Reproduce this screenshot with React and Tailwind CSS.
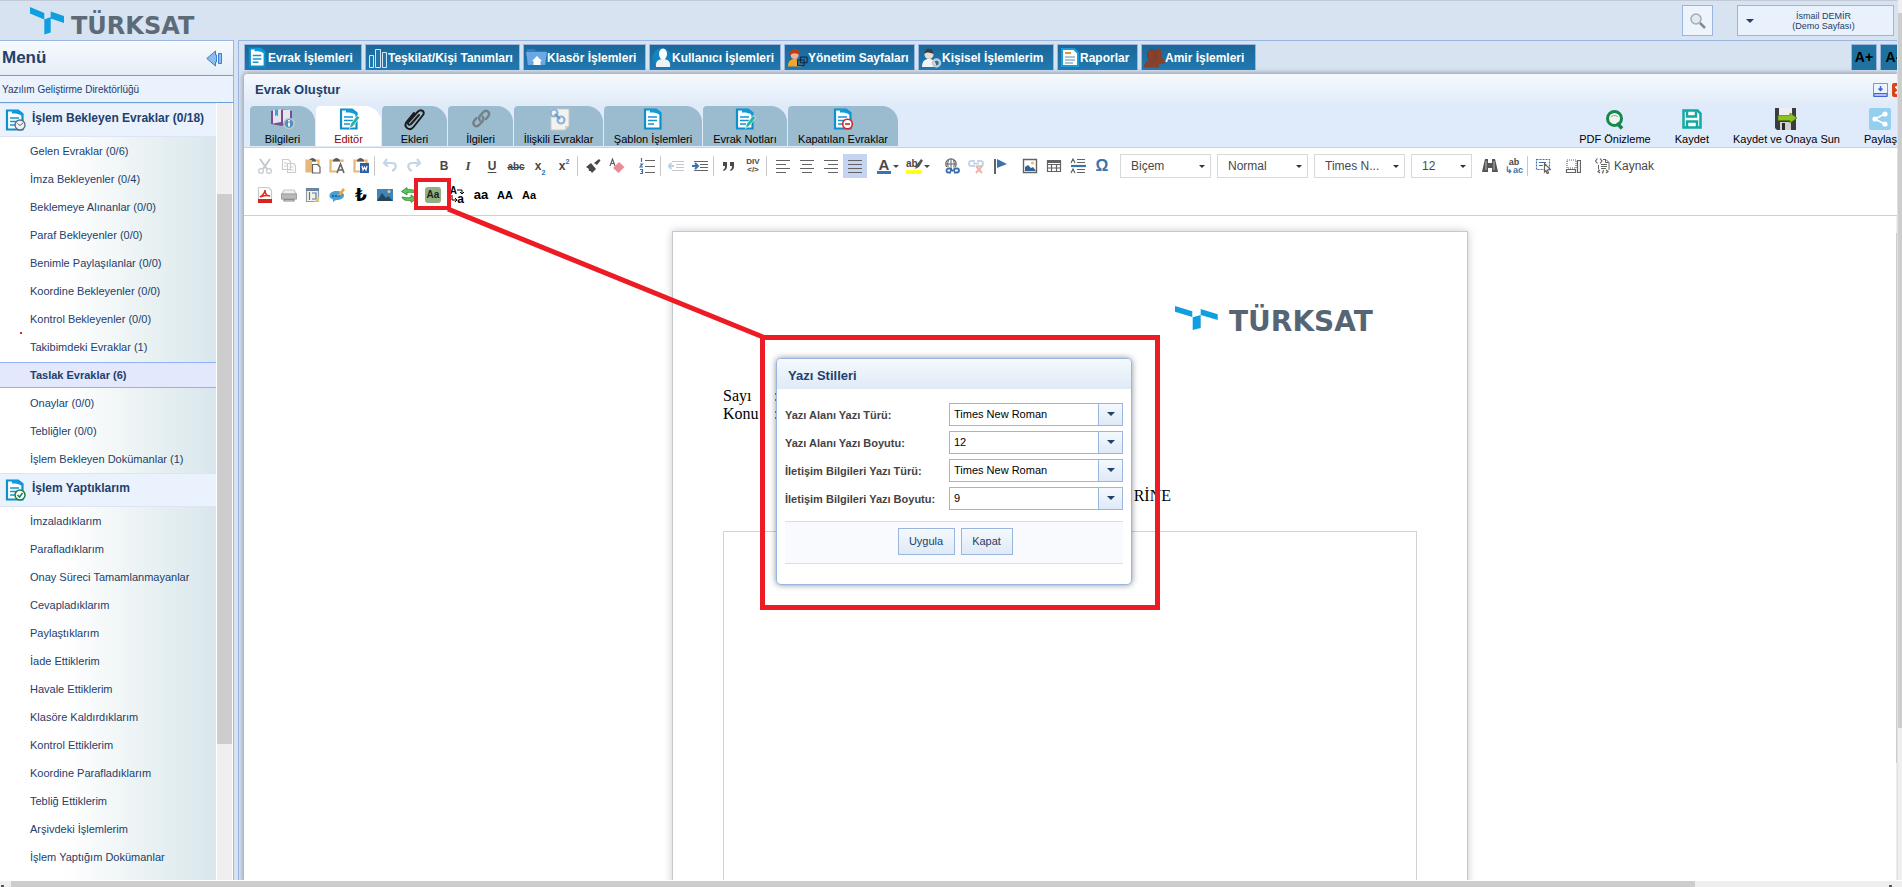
import { useState } from "react";
import clsx from "clsx";

const pending = [
    "Gelen Evraklar (0/6)",
    "İmza Bekleyenler (0/4)",
    "Beklemeye Alınanlar (0/0)",
    "Paraf Bekleyenler (0/0)",
    "Benimle Paylaşılanlar (0/0)",
    "Koordine Bekleyenler (0/0)",
    "Kontrol Bekleyenler (0/0)",
    "Takibimdeki Evraklar (1)",
    "Taslak Evraklar (6)",
    "Onaylar (0/0)",
    "Tebliğler (0/0)",
    "İşlem Bekleyen Dokümanlar (1)",
];

const done = [
    "İmzaladıklarım",
    "Parafladıklarım",
    "Onay Süreci Tamamlanmayanlar",
    "Cevapladıklarım",
    "Paylaştıklarım",
    "İade Ettiklerim",
    "Havale Ettiklerim",
    "Klasöre Kaldırdıklarım",
    "Kontrol Ettiklerim",
    "Koordine Parafladıklarım",
    "Tebliğ Ettiklerim",
    "Arşivdeki İşlemlerim",
    "İşlem Yaptığım Dokümanlar",
];

// Blue sheet used all over the app, with an optional badge in the corner
function DocIcon({ badge, size = 22 }) {
    return (
        <svg width={size} height={size} viewBox="0 0 22 22" fill="none" className="shrink-0">
            <path d="M3 1.500h11l4.500 3.500v15.500H3z" fill="#fff" stroke="#0f8fcb" strokeWidth="2.200" />
            <path d="M8 1h6l5 4v3c-3-3-6-3.500-11-3.500z" fill="#0d9ade" />
            <path d="M6 9h9M6 12.500h9M6 16h6" stroke="#1494d2" strokeWidth="1.600" />
            {badge === "pencil" && (
                <path d="M11.500 20.500l1-4.500 6.500-8.500 2.800 2-6.500 8.500z" fill="#27b5a3" stroke="#fff" strokeWidth=".6" />
            )}
            {badge === "clock" && (
                <g stroke="#5d6a73">
                    <circle cx="16" cy="16" r="5" fill="#eef1f3" strokeWidth="1.300" />
                    <path d="M13.500 14.500l2.500 2 3-2.500" />
                </g>
            )}
            {badge === "check" && (
                <g>
                    <circle cx="16" cy="16" r="5" fill="#fff" stroke="#15803f" strokeWidth="1.500" />
                    <path d="M13.500 16l2 2 3-4" stroke="#15803f" strokeWidth="1.500" />
                </g>
            )}
            {badge === "minus" && (
                <g>
                    <circle cx="15.500" cy="16" r="4.800" fill="#fff" stroke="#d2232a" strokeWidth="1.600" />
                    <path d="M13 16h5" stroke="#d2232a" strokeWidth="1.600" />
                </g>
            )}
        </svg>
    );
}

function BookIcon() {
    return (
        <svg width="24" height="22" viewBox="0 0 24 22">
            <path d="M0 3l9-2 2 1 2-1 8 2v13l-8 .500-2 1.500-11-2z" fill="#7a4d90" />
            <path d="M2 2l8-1v13l-8 1.500zM12 1.500l7 .5v12l-7 1z" fill="#e4e6ec" />
            <path d="M4 1.500h3v7L5.500 7 4 8.500z" fill="#3aa3dc" />
            <circle cx="18" cy="15.500" r="5" fill="#4b91c1" stroke="#c3c8cc" strokeWidth="1.500" />
            <path d="M18 12v1.500M18 14.500v4" stroke="#fff" strokeWidth="1.800" />
        </svg>
    );
}

function ClipIcon() {
    return (
        <svg width="24" height="24" viewBox="0 0 24 24" fill="none" stroke="#1c1c1c" strokeWidth="2" strokeLinecap="round">
            <path d="M16 7l-8 9c-1.500 2-4 0-2.500-2L15 3.500c3-3 7.500 0 5 3.500L10.500 19c-3.500 4.500-10.500.5-7-5L11 5" />
        </svg>
    );
}

function ChainIcon() {
    return (
        <svg width="22" height="22" viewBox="0 0 22 22" fill="none" stroke="#73818a" strokeWidth="2.400" strokeLinecap="round">
            <path d="M10 12.500c-2-2.500-1-4 1-6l3-3c3-2 6.500 1 4.500 4.500L16 11" />
            <path d="M12.500 8.500c2 2.500 1 4-1 6l-3 3c-3 2-6.500-1-4.500-4.500L6.500 10" />
        </svg>
    );
}

function RelatedIcon() {
    return (
        <svg width="22" height="23" viewBox="0 0 22 23" fill="none">
            <path d="M3 1h18v17l-4 4H3z" fill="#f2f2f0" stroke="#c9c9c5" />
            <path d="M17 22v-4h4z" fill="#d3d2ca" />
            <circle cx="6" cy="5" r="3.500" stroke="#8db4d6" strokeWidth="2.200" />
            <circle cx="13" cy="12" r="3.500" stroke="#8db4d6" strokeWidth="2.200" />
            <path d="M7 6l5 5" stroke="#6f9cc6" strokeWidth="2.400" />
        </svg>
    );
}

const navItems = [
    { label: "Evrak İşlemleri", width: "w-[118px]", icon: <DocIcon size={21} /> },
    {
        label: "Teşkilat/Kişi Tanımları",
        width: "w-[155px]",
        icon: (
            <svg width="20" height="20" viewBox="0 0 20 20" fill="#2276ad" stroke="#d4e6f3">
                <path d="M1.500 7.500h4v12h-4zM7.500 1.500h5v18h-5zM14.500 4.500h4v15h-4z" />
            </svg>
        ),
    },
    {
        label: "Klasör İşlemleri",
        width: "w-[123px]",
        icon: (
            <svg width="21" height="19" viewBox="0 0 21 19">
                <path d="M1 1h7l2 2h10v14H1z" fill="#2f7fc4" />
                <path d="M0 4h21l-2 13H2z" fill="#6aa9e4" />
                <path d="M11 8l5 5h-1.500v4h-7v-4H6z" fill="#fff" />
            </svg>
        ),
    },
    {
        label: "Kullanıcı İşlemleri",
        width: "w-[132px]",
        icon: (
            <svg width="20" height="20" viewBox="0 0 20 20">
                <circle cx="10" cy="9.500" r="9.500" fill="#1583c2" />
                <ellipse cx="11" cy="6" rx="4" ry="5.500" fill="#fff" />
                <path d="M4 19c-1-6 3-8 7-8s8 2 7 8z" fill="#eef2f5" />
            </svg>
        ),
    },
    {
        label: "Yönetim Sayfaları",
        width: "w-[131px]",
        icon: (
            <svg width="21" height="20" viewBox="0 0 22 20">
                <path d="M1 19c0-6 3-8 7-8s7 2 7 8z" fill="#f2a629" />
                <circle cx="8" cy="7" r="4" fill="#f5b08a" />
                <path d="M3 7c-1-8 11-9 10-1-3 0-5-3-10 1z" fill="#c33a17" />
                <path d="M14 9h7v6h-7zM11 12h7v6h-7z" fill="#2a70a8" stroke="#0b2238" />
            </svg>
        ),
    },
    {
        label: "Kişisel İşlemlerim",
        width: "w-[136px]",
        icon: (
            <svg width="21" height="20" viewBox="0 0 21 20">
                <path d="M1 19c0-6 3-8 7-8s7 2 7 8z" fill="#f1f5f8" />
                <circle cx="8" cy="6.500" r="4.500" fill="#e8ded6" />
                <path d="M3.500 6c0-7 9-7 9 0-3-1-6-3-9 0z" fill="#3c3c3c" />
                <circle cx="15.500" cy="15" r="3.500" fill="none" stroke="#c3cbd1" strokeWidth="2.500" />
            </svg>
        ),
    },
    {
        label: "Raporlar",
        width: "w-[81px]",
        icon: (
            <svg width="20" height="19" viewBox="0 0 20 19" fill="none">
                <path d="M2 1h12l4 4v13H2z" fill="#fff" stroke="#1e9ad6" strokeWidth="2" />
                <path d="M5 5h6" stroke="#ef9231" strokeWidth="2" />
                <path d="M5 9h10M5 12h10M5 15h8" stroke="#8fb4cc" strokeWidth="1.500" />
            </svg>
        ),
    },
    {
        label: "Amir İşlemleri",
        width: "w-[115px]",
        icon: (
            <svg width="21" height="20" viewBox="0 0 22 20" fill="#8a412c">
                <ellipse cx="15" cy="5" rx="4" ry="5" />
                <path d="M11 9h7c3 2 4 4 4 7H11z" />
                <ellipse cx="8" cy="7" rx="4.500" ry="6" stroke="#6f3121" strokeWidth=".6" />
                <path d="M0 20c0-5 3-8 8-8s8 3 8 8z" />
            </svg>
        ),
    },
];

const tabs = [
    { label: "Bilgileri", width: "w-[65px]", icon: <BookIcon /> },
    { label: "Editör", width: "w-[65px]", icon: <DocIcon badge="pencil" /> },
    { label: "Ekleri", width: "w-[65px]", icon: <ClipIcon /> },
    { label: "İlgileri", width: "w-[65px]", icon: <ChainIcon /> },
    { label: "İlişkili Evraklar", width: "w-[89px]", icon: <RelatedIcon /> },
    { label: "Şablon İşlemleri", width: "w-[98px]", icon: <DocIcon /> },
    { label: "Evrak Notları", width: "w-[84px]", icon: <DocIcon badge="pencil" /> },
    { label: "Kapatılan Evraklar", width: "w-[110px]", icon: <DocIcon badge="minus" /> },
];

const actions = [
    {
        label: "PDF Önizleme",
        icon: (
            <svg width="20" height="22" viewBox="0 0 20 22" fill="none">
                <circle cx="9.500" cy="10.500" r="7" fill="#eef6f2" stroke="#16884b" strokeWidth="3" />
                <path d="M12 15l5 5.500" stroke="#16884b" strokeWidth="3.500" />
                <path d="M6 9c2-2 5-2 7 0" stroke="#5bb385" />
            </svg>
        ),
    },
    {
        label: "Kaydet",
        icon: (
            <svg width="20" height="22" viewBox="0 0 20 22" fill="none" stroke="#10a9a4" strokeWidth="2.500">
                <path d="M1.500 2.500h14l3 3v14h-17z" fill="#fff" />
                <path d="M5 2.500v6h9v-6M5 19.500v-6h10v6" />
            </svg>
        ),
    },
    {
        label: "Kaydet ve Onaya Sun",
        icon: (
            <svg width="24" height="22" viewBox="0 0 24 22">
                <path d="M1 0h21v22H3l-2-2z" fill="#3b3b40" />
                <path d="M5 0h13v9H5z" fill="#eeeef0" />
                <path d="M6 14h11v8H6z" fill="#cfcfd2" />
                <path d="M8 15h3v7H8z" fill="#2a2a2d" />
                <path d="M4 7.500h12V5l7 5-7 5v-2.500H4z" fill="#8cc21f" stroke="#4f7d10" strokeWidth=".7" />
            </svg>
        ),
    },
    {
        label: "Paylaş",
        icon: (
            <svg width="22" height="22" viewBox="0 0 22 22">
                <rect width="22" height="22" rx="2" fill="#95cfee" />
                <path d="M15.500 6L6 11l9.500 5" stroke="#fff" strokeWidth="1.500" fill="none" />
                <circle cx="16" cy="6" r="2.600" fill="#fff" />
                <circle cx="6" cy="11" r="2.600" fill="#fff" />
                <circle cx="16" cy="16" r="2.600" fill="#fff" />
            </svg>
        ),
    },
];

function Svg({ children, size = 16 }) {
    return (
        <svg width={size} height={size} viewBox="0 0 16 16" fill="none" stroke="#636363" strokeWidth="1.200">
            {children}
        </svg>
    );
}

function Clipboard({ children }) {
    return (
        <Svg>
            <path d="M1.500 2.500h12v11h-12z" fill="#fff" stroke="#e3b878" strokeWidth="2.200" />
            <path d="M4 2.500c0-1 2-2.500 3.500-2.500S11 1.500 11 2.500v1H4z" fill="#5b5b5b" stroke="none" />
            {children}
        </Svg>
    );
}

function Tool({ title, active, wide, children }) {
    return (
        <button
            type="button"
            title={title}
            className={clsx(
                "flex h-[24px] shrink-0 items-center justify-center text-[#484848]",
                wide ? "w-[30px]" : "w-[24px]",
                active && "bg-[#c4d4f1]"
            )}
        >
            {children}
        </button>
    );
}

const Sep = () => <span className="-mr-px ml-px h-[20px] w-[5px] shrink-0 border-l border-[#c8c8c8]" />;

const Caret = () => <span className="border-x-[3px] border-t-[3px] border-x-transparent border-t-[#484848]" />;

function Combo({ label, value, width }) {
    return (
        <span className={clsx("relative mr-[6px] flex shrink-0 items-center", width)}>
            <select aria-label={label} className="h-[24px] w-full appearance-none border border-[#d9d9d9] bg-white pl-[10px] text-[12px] leading-[16px] text-[#484848]">
                <option>{value}</option>
            </select>
            <span className="pointer-events-none absolute right-[6px] border-x-[3px] border-t-[3px] border-x-transparent border-t-[#333]" />
        </span>
    );
}

const lines = (d) => (
    <Svg>
        <path d={d} />
    </Svg>
);

function EditorToolbar() {
    return (
        <div className="border-y border-[#d1d1d1] bg-white pt-[6px] pb-[8px] pl-[9px]" role="toolbar">
            <div className="flex items-center">
                <Tool title="Kes">
                    <Svg>
                        <g stroke="#c5c9ce">
                            <path d="M3 1l7 10M13 1L6 11" strokeWidth="2" />
                            <circle cx="4" cy="13" r="2.400" />
                            <circle cx="12" cy="13" r="2.400" />
                        </g>
                    </Svg>
                </Tool>
                <Tool title="Kopyala">
                    <Svg>
                        <g stroke="#c9cdd2">
                            <path d="M1.500 1.500h6l2 2v8h-8zM6.500 5.500h6l2 2v7h-8z" fill="#fff" />
                            <path d="M3 5h3M3 8h3M8.500 9h4M8.500 12h4" />
                        </g>
                    </Svg>
                </Tool>
                <Tool title="Yapıştır">
                    <Clipboard>
                        <path d="M1 2h6v12H1z" fill="#e3b878" stroke="none" />
                        <path d="M7.500 6.500h5l2.500 2.500v6H7.500z" fill="#fff" />
                    </Clipboard>
                </Tool>
                <Tool title="Düz metin olarak yapıştır">
                    <Clipboard>
                        <path d="M8 4h8v12H8z" fill="#fff" stroke="none" />
                        <path d="M8 15l3.500-9L15 15M9 12h5" strokeWidth="1.600" />
                    </Clipboard>
                </Tool>
                <Tool title="Word'den yapıştır">
                    <Clipboard>
                        <path d="M7 5h9v10H7z" fill="#2c5fa8" stroke="none" />
                        <path d="M9 8l1 4 1.500-3 1.500 3 1-4" stroke="#fff" />
                    </Clipboard>
                </Tool>
                <Sep />
                <Tool title="Geri al">
                    <Svg>
                        <path d="M5 1L2 5l4 3.500M2.500 5H10c5 0 5 6 0 8" stroke="#c3d6e8" strokeWidth="2.200" />
                    </Svg>
                </Tool>
                <Tool title="Tekrar yap">
                    <Svg>
                        <path d="M11 1l3 4-4 3.500M13.500 5H6c-5 0-5 6 0 8" stroke="#c3d6e8" strokeWidth="2.200" />
                    </Svg>
                </Tool>
                <div className="ml-[6px] flex">
                    <Tool title="Kalın">
                        <b className="text-[12px]">B</b>
                    </Tool>
                    <Tool title="İtalik">
                        <b className="font-['Liberation_Serif',serif] text-[13px] italic">I</b>
                    </Tool>
                    <Tool title="Altı çizgili">
                        <b className="text-[12px] underline underline-offset-2">U</b>
                    </Tool>
                    <Tool title="Üstü çizgili">
                        <span className="text-[10px] font-bold line-through">abc</span>
                    </Tool>
                    <Tool title="Alt simge">
                        <b className="text-[12px]">x</b>
                        <b className="self-end text-[7px] text-[#2f6fb0]">2</b>
                    </Tool>
                    <Tool title="Üst simge">
                        <b className="text-[12px]">x</b>
                        <b className="self-start pt-[3px] text-[7px] text-[#2f6fb0]">2</b>
                    </Tool>
                </div>
                <Sep />
                <Tool title="Biçimi kopyala">
                    <Svg>
                        <path d="M9 5l5-4 1.500 1.500L12 7zM1 9l5-4 5 6-4 4-1.500-2L4 13l-.5-2.500z" fill="#484848" stroke="none" />
                    </Svg>
                </Tool>
                <Tool title="Biçimi kaldır">
                    <Svg>
                        <path d="M1 8l2.500-7L6 8M2 5.500h3" />
                        <path d="M4 10l6-6 5.500 5-6 6z" fill="#ea8c96" stroke="none" />
                    </Svg>
                </Tool>
                <div className="ml-[6px] flex">
                    <Tool title="Numaralı liste">
                        <Svg>
                            <path d="M6 2.500h10M6 8.500h10M6 14.500h10" />
                            <path d="M2.500 0v4M1 6h2.500L1 9h3M1 11.500h2.500v4H1M2 13.500h1.500" stroke="#3a73b0" />
                        </Svg>
                    </Tool>
                </div>
                <Sep />
                <Tool title="Girintiyi azalt">
                    <Svg>
                        <path d="M4 3.500h12M8 6.500h8M8 9.500h8M4 12.500h12" stroke="#c3c7cc" />
                        <path d="M6 8H1M3.500 5L.5 8l3 3" stroke="#bcd2e8" strokeWidth="2" />
                    </Svg>
                </Tool>
                <Tool title="Girintiyi artır">
                    <Svg>
                        <path d="M2 3.500h14M8 6.500h8M8 9.500h8M2 12.500h14" />
                        <path d="M0 8h5M3 5l3 3-3 3" stroke="#3a73b0" strokeWidth="2" />
                    </Svg>
                </Tool>
                <Sep />
                <Tool title="Alıntı">
                    <Svg>
                        <path d="M2 4h4v4c0 3-1 4-3.500 5l-.5-1c1.500-1 2-2 2-4H2zM9 4h4v4c0 3-1 4-3.500 5l-.5-1c1.500-1 2-2 2-4H9z" fill="#484848" stroke="none" />
                    </Svg>
                </Tool>
                <Tool title="Div ekle">
                    <span className="flex flex-col text-[8px] leading-[8px] font-bold">
                        <span>DIV</span>
                        <span>&lt;/&gt;</span>
                    </span>
                </Tool>
                <Sep />
                <div className="ml-px flex">
                    <Tool title="Sola hizala">{lines("M1 2.500h14M1 6.500h10M1 10.500h14M1 14.500h10")}</Tool>
                    <Tool title="Ortala">{lines("M1 2.500h14M3 6.500h10M1 10.500h14M3 14.500h10")}</Tool>
                    <Tool title="Sağa hizala">{lines("M1 2.500h14M5 6.500h10M1 10.500h14M5 14.500h10")}</Tool>
                    <Tool title="İki yana yasla" active>
                        {lines("M1 2.500h14M1 6.500h14M1 10.500h14M1 14.500h14")}
                    </Tool>
                </div>
                <div className="ml-[6px] flex">
                    <Tool title="Yazı rengi" wide>
                        <span className="mr-[2px] border-b-[3px] border-[#3a73b0] px-[2px] text-[15px] leading-[13px] font-bold">A</span>
                        <Caret />
                    </Tool>
                    <Tool title="Arka plan rengi" wide>
                        <span className="mr-[2px] flex w-[16px] border-b-4 border-[#ffff20] text-[10px] leading-[12px] font-bold">
                            ab
                            <svg className="-ml-[3px] shrink-0" width="8" height="12" viewBox="0 0 8 12">
                                <path d="M0 11l1.500-4L6 1l2 1.500L4 9z" fill="#555" />
                            </svg>
                        </span>
                        <Caret />
                    </Tool>
                </div>
                <div className="ml-[7px] flex">
                    <Tool title="Bağlantı">
                        <Svg>
                            <circle cx="7" cy="6" r="5.200" />
                            <path d="M2 6h10M7 1v10M4.500 2c-1 3-1 5 0 8M9.500 2c1 3 1 5 0 8" strokeWidth="1" />
                            <path d="M1 9h15v6H1z" fill="#fff" stroke="none" />
                            <path d="M8 10.500H4.500a2 2 0 000 4H7M9.500 10.500H13a2 2 0 010 4h-3M6 12.500h5" stroke="#3a6ea8" strokeWidth="1.800" />
                        </Svg>
                    </Tool>
                    <Tool title="Bağlantıyı kaldır">
                        <Svg>
                            <path d="M7 3H3.500a2 2 0 000 5H7M9 3h3.500a2 2 0 010 5H9M5 5.500h6" stroke="#c3d5e6" strokeWidth="2" />
                            <path d="M8 8l6 7M14 8l-6 7" stroke="#efb3a5" strokeWidth="2" />
                        </Svg>
                    </Tool>
                    <Tool title="Çapa">
                        <Svg>
                            <path d="M3 1v15" strokeWidth="2" />
                            <path d="M5 1l10 5-10 4z" fill="#3a73b0" stroke="none" />
                        </Svg>
                    </Tool>
                </div>
                <div className="ml-[6px] flex">
                    <Tool title="Resim">
                        <Svg>
                            <path d="M1.500 1.500h13v13h-13z" strokeWidth="1.400" />
                            <path d="M3 13V9l3-2 3 3 2-1 3 4z" fill="#2f6396" stroke="none" />
                            <circle cx="10.500" cy="5" r="1.600" fill="#eac06f" stroke="none" />
                        </Svg>
                    </Tool>
                    <Tool title="Tablo">
                        <Svg>
                            <path d="M1.500 2.500h13v11h-13zM1 6.500h14M1 10h14M5.500 6v8M10.500 6v8" />
                            <path d="M1 2h14v3H1z" fill="#636363" stroke="none" />
                        </Svg>
                    </Tool>
                    <Tool title="Yatay çizgi">
                        <Svg>
                            <path d="M1 5l2-4 2 4M1 15l2-4 2 4M7 1.500h8M7 4.500h8M7 11.500h8M7 14.500h8" />
                            <path d="M1 8h15" stroke="#3a73b0" strokeWidth="2.200" />
                        </Svg>
                    </Tool>
                    <Tool title="Özel karakter">
                        <b className="text-[16px] text-[#3a73b0]">Ω</b>
                    </Tool>
                </div>
                <div className="ml-[6px] flex">
                    <Combo label="Biçem" value="Biçem" width="w-[91px]" />
                    <Combo label="Paragraf" value="Normal" width="w-[91px]" />
                    <Combo label="Yazı türü" value="Times N..." width="w-[91px]" />
                    <Combo label="Boyut" value="12" width="w-[61px]" />
                </div>
                <Tool title="Bul">
                    <Svg>
                        <path d="M2 5l1-4h3v4h4V1h3l1 4 2 9h-6v-4H6v4H0z" fill="#555" stroke="none" />
                        <path d="M4 3v9M12 3v9" stroke="#aaa" />
                    </Svg>
                </Tool>
                <Tool title="Değiştir">
                    <span className="flex flex-col text-[9px] leading-[8px]">
                        <b>ab</b>
                        <b className="text-[#3a73b0]">↳ac</b>
                    </span>
                </Tool>
                <Sep />
                <Tool title="Tümünü seç">
                    <Svg>
                        <path d="M1.500 1.500h13v10h-13z" stroke="#3a73b0" strokeDasharray="2 1" />
                        <path d="M4 4.500h7M4 7.500h4" stroke="#3a73b0" />
                        <path d="M9.500 5.500l6 6-3 .5 1 3-1.500.5-1-3-1.500 1.500z" fill="#fff" />
                    </Svg>
                </Tool>
                <div className="ml-[6px] flex">
                    <Tool title="Blokları göster">
                        <Svg>
                            <path d="M2 2h9v8H2z" strokeDasharray="1 1" />
                            <path d="M1.500 11.500h9v3h-9zM12.500 2.500h3v12h-3z" />
                        </Svg>
                    </Tool>
                </div>
                <button type="button" className="ml-[10px] flex h-[24px] shrink-0 items-center gap-[3px] text-[12px] text-[#484848]">
                    <Svg>
                        <path d="M2.500.5L.5 3l2 2.500M5 .5L7 3 5 5.500" />
                        <path d="M8 1.500h3l3 3v7.500M3.500 7v4.500M10.500 1.500v3h3M6 6.500h6M6 8.500h6M6 10.500h5" strokeWidth="1" />
                        <path d="M5 12l-2 1.500L5 15M11 12l2 1.500L11 15M8.500 12l-1 3.500" />
                    </Svg>
                    Kaynak
                </button>
            </div>
            <div className="mt-[5px] flex items-center">
                <Tool title="PDF">
                    <Svg>
                        <path d="M1.500.5h10l3 3v12h-13z" fill="#fff" stroke="#c9c9c9" />
                        <path d="M1 12h14v4H1z" fill="#d8241c" stroke="none" />
                        <path d="M3 10c4-2 5-6 5-7 0 4 2 6 5 6-3-1-7 0-10 1z" stroke="#e02b22" strokeWidth="1.500" />
                    </Svg>
                </Tool>
                <Tool title="Yazdır">
                    <Svg>
                        <path d="M3 3h10l2 4H1z" fill="#f0f0f0" stroke="#c5c5c5" />
                        <path d="M.5 7h15v5H.5z" fill="#b9b9b9" stroke="#a0a0a0" />
                        <path d="M3 12.500h10v1.500H3z" fill="#ddd" stroke="#8c8c8c" />
                    </Svg>
                </Tool>
                <Tool title="Şablon">
                    <Svg>
                        <path d="M1.500 1.500h12v13h-12z" fill="#f7f3e4" stroke="#8e9cac" />
                        <path d="M1 1h13v3H1z" fill="#6d83a0" stroke="none" />
                        <path d="M4.500 5v8M7 6h4v6H7" stroke="#4a7bb3" />
                        <path d="M9 15l5-5v5z" fill="#e6c06a" stroke="none" />
                    </Svg>
                </Tool>
                <Tool title="Yorum">
                    <Svg>
                        <path d="M7 4c5 0 8 2 8 4.500S12 13 7 13l-3 2v-2.500C-2 11 0 4 7 4z" fill="#4a9fd4" stroke="none" />
                        <path d="M3 9h8" stroke="#1d6ba6" strokeWidth="2" strokeDasharray="2 1" />
                        <path d="M10 6l4-5 2 2-4 5-3 1z" fill="#eda83a" stroke="none" />
                    </Svg>
                </Tool>
                <Tool title="Türk lirası">
                    <b className="font-['DejaVu_Sans',sans-serif] text-[17px] leading-[17px] text-black">₺</b>
                </Tool>
                <Tool title="Görsel">
                    <Svg>
                        <path d="M0 2h16v12H0z" fill="#3d86bb" stroke="none" />
                        <path d="M0 14l5-8 4 5 2-2 5 5z" fill="#29455c" stroke="none" />
                        <circle cx="12" cy="4.500" r="1.500" fill="#f4cf74" stroke="none" />
                    </Svg>
                </Tool>
                <Tool title="Yenile">
                    <Svg>
                        <path d="M15 6c-1-3-4-4-9-3.500V.5L.5 4.500 6 8V5.500c4-.5 6 0 9 .5zM1 10c1 3 4 4 9 3.500v2l5.500-4L10 8v2.500C6 11 4 10.500 1 10z" fill="#5cc55a" stroke="#2c8a2d" strokeWidth=".8" />
                    </Svg>
                </Tool>
                <Tool title="Yazı Stilleri">
                    <span className="h-[16px] w-[16px] rounded-[3px] bg-[#8fb182] text-center text-[10px] leading-[16px] font-bold text-[#222]">Aa</span>
                </Tool>
                <Tool title="Büyük/küçük harf">
                    <span className="grid grid-cols-2 text-[10px] leading-[8px] font-bold text-black">
                        <span>A</span>
                        <svg width="7" height="8" viewBox="0 0 7 8" fill="none" stroke="#000">
                            <path d="M0 3h5v4M3 5l2 2 2-2" />
                        </svg>
                        <svg width="7" height="8" viewBox="0 0 7 8" fill="none" stroke="#000">
                            <path d="M2 0v5h5M5 3l2 2-2 2" />
                        </svg>
                        <span className="text-[12px]">a</span>
                    </span>
                </Tool>
                <Tool title="Küçük harf">
                    <b className="text-[13px] text-black">aa</b>
                </Tool>
                <Tool title="Büyük harf">
                    <b className="text-[11px] text-black">AA</b>
                </Tool>
                <Tool title="Baş harf büyük">
                    <b className="text-[11px] text-black">Aa</b>
                </Tool>
            </div>
        </div>
    );
}

function MenuGroup({ title, badge, items, selected, onSelect }) {
    return (
        <section>
            <h2 className="flex h-[34px] items-center gap-[6px] border-y border-[#dfe3f3] bg-[#eaf2fd] pl-[4px] text-[12px] font-bold text-[#22406b]">
                <DocIcon badge={badge} size={22} />
                <span className="pb-[4px]">{title}</span>
            </h2>
            <ul>
                {items.map((item) => (
                    <li key={item} className="py-px">
                        <a
                            href="#"
                            onClick={() => onSelect(item)}
                            className={clsx(
                                "flex h-[26px] items-center border-y pl-[30px] text-[11px] whitespace-nowrap text-[#22406b]",
                                item === selected ? "border-[#8fb0fb] bg-[#e3e8fd] font-bold" : "border-transparent"
                            )}
                        >
                            {item}
                        </a>
                    </li>
                ))}
            </ul>
        </section>
    );
}

function Sidebar() {
    const [selected, setSelected] = useState("Taslak Evraklar (6)");

    return (
        <aside className="flex w-[234px] shrink-0 flex-col border-t border-r border-[#9ab6df] bg-white">
            <div className="flex h-[35px] shrink-0 items-center justify-between border-b border-[#6f9dd6] bg-linear-to-b from-[#f6fafe] to-[#e4edf7] pr-[10px] pl-[2px]">
                <h1 className="text-[17px] font-bold text-[#22406b]">Menü</h1>
                <button type="button" title="Menüyü gizle">
                    <svg width="17" height="17" viewBox="0 0 17 17" fill="#8dbcf2" stroke="#3f7fcb">
                        <path d="M9.500 1v4h1v7h-1v4L.8 8.500zM12.500 3.500h3v10h-3z" />
                    </svg>
                </button>
            </div>
            <p className="flex h-[27px] shrink-0 items-center border-b border-[#6f9dd6] bg-[#eaf2fd] pl-[2px] text-[10px] text-[#22406b]">
                Yazılım Geliştirme Direktörlüğü
            </p>
            <div className="flex min-h-0 flex-1">
                <nav className="min-w-0 flex-1 overflow-hidden bg-linear-to-r from-white from-30% via-[#e6eff1] via-75% to-[#d8e7ed]">
                    <MenuGroup title="İşlem Bekleyen Evraklar (0/18)" badge="clock" items={pending} selected={selected} onSelect={setSelected} />
                    <MenuGroup title="İşlem Yaptıklarım" badge="check" items={done} selected={selected} onSelect={setSelected} />
                </nav>
                <div className="mx-px w-[15px] bg-[#efefef] pt-[91px]">
                    <div className="h-[550px] bg-[#cdcdcd]" />
                </div>
            </div>
        </aside>
    );
}

function DocumentPage() {
    return (
        <div className="mx-auto flex h-[1123px] w-[796px] flex-col border border-[#c5c8cc] bg-white px-[50px] pt-[68px] font-['Liberation_Serif',serif] text-[16px] leading-[18px] text-black shadow-[0_0_8px_rgba(110,120,140,0.4)]">
            <div className="mr-[26px] flex h-[36px] w-[216px] items-center gap-[11px] self-end">
                <svg width="43" height="24" viewBox="0 0 43 24" fill="#0d9fe0" className="shrink-0">
                    <path d="M0 0l17.300 5.300V11L0 5.700zM17.700 11.300l8-2.300v13l-8 2zM25.700 3l17 5.300V14l-17-5z" />
                </svg>
                <span className="pt-[7px] font-['DejaVu_Sans',sans-serif] text-[28px] leading-[29px] font-bold text-[#566573]">TÜRKSAT</span>
            </div>
            <dl className="mt-[51px] grid grid-cols-[51px_auto] justify-start">
                <dt>Sayı</dt>
                <dd>:</dd>
                <dt>Konu</dt>
                <dd>:</dd>
            </dl>
            <p className="mt-[64px] pr-[246px] text-right">RİNE</p>
            <div className="mt-[26px] flex-1 border border-[#d2d2d2]" />
        </div>
    );
}

const styleFields = [
    { id: "alan-tur", label: "Yazı Alanı Yazı Türü:", value: "Times New Roman" },
    { id: "alan-boyut", label: "Yazı Alanı Yazı Boyutu:", value: "12" },
    { id: "iletisim-tur", label: "İletişim Bilgileri Yazı Türü:", value: "Times New Roman" },
    { id: "iletisim-boyut", label: "İletişim Bilgileri Yazı Boyutu:", value: "9" },
];

function StyleDialog() {
    return (
        <div
            role="dialog"
            aria-label="Yazı Stilleri"
            className="absolute top-[358px] left-[776px] w-[356px] overflow-hidden rounded-[5px] border border-[#9ab6df] bg-white shadow-[0_0_6px_rgba(60,70,90,0.6)]"
        >
            <h2 className="flex h-[30px] items-center bg-linear-to-b from-[#f4f9fd] to-[#dfeaf6] pt-[4px] pl-[11px] text-[13px] font-bold text-[#22406b]">
                Yazı Stilleri
            </h2>
            <div className="px-[8px] pt-[13px] pb-[20px]">
                <div className="flex flex-col gap-[4px]">
                    {styleFields.map((f) => (
                        <div key={f.id} className="flex h-[24px] items-center justify-between">
                            <label htmlFor={f.id} className="pt-[2px] text-[11px] font-bold text-[#444]">
                                {f.label}
                            </label>
                            <span className="relative flex w-[174px] items-center">
                                <select id={f.id} className="h-[23px] w-full appearance-none border border-[#9ab6df] bg-white pl-[4px] text-[11px] text-black">
                                    <option>{f.value}</option>
                                </select>
                                <span className="pointer-events-none absolute right-0 flex h-[23px] w-[25px] items-center justify-center border border-[#9ab6df] bg-linear-to-b from-[#f4f9fd] to-[#dfeaf6]">
                                    <span className="border-x-4 border-t-4 border-x-transparent border-t-[#22406b]" />
                                </span>
                            </span>
                        </div>
                    ))}
                </div>
                <div className="mt-[11px] flex h-[43px] justify-center gap-[6px] border-y border-[#d5dfea] bg-[#f9fafd] pt-[6px] pl-[2px]">
                    <button type="button" className="h-[27px] w-[57px] border border-[#9ab6df] bg-linear-to-b from-[#f4f9fd] to-[#dfeaf6] text-[11px] text-[#22406b]">
                        Uygula
                    </button>
                    <button type="button" className="h-[27px] w-[52px] border border-[#9ab6df] bg-linear-to-b from-[#f4f9fd] to-[#dfeaf6] text-[11px] text-[#22406b]">
                        Kapat
                    </button>
                </div>
            </div>
        </div>
    );
}

// Red frames and connector that point from the toolbar button to the dialog
function Callout() {
    return (
        <svg className="pointer-events-none absolute inset-0 h-full w-full" fill="none" stroke="#ed1c24">
            <rect x="416" y="180" width="33" height="28" strokeWidth="4" />
            <path d="M448 209L763 337" strokeWidth="5" />
            <rect x="762.500" y="337.500" width="395" height="270" strokeWidth="5" />
            <path d="M20 333h2" strokeWidth="2" />
        </svg>
    );
}

export default function App() {
    const [tab, setTab] = useState("Editör");

    return (
        <div className="relative flex h-screen flex-col overflow-hidden bg-[#d8e3f1] font-['Liberation_Sans',Arial,sans-serif]">
            <div className="flex min-h-0 flex-1">
                <div className="flex min-w-0 flex-1 flex-col overflow-hidden border-t border-[#c3c9d6]">
                    <header className="flex h-[39px] shrink-0 items-center justify-between pr-[3px] pl-[30px]">
                        <a href="#" className="flex items-center gap-[7px]">
                            <svg width="34" height="28" viewBox="0 0 34 28" fill="#0d9fe0">
                                <path d="M0 0l14.300 6v6.500L0 6.500zM14.300 12.500l6.400-2.500v15.500l-6.400 2zM20.700 4.500L34 9v7l-13.300-4.500z" />
                            </svg>
                            <span className="pt-[11px] font-['DejaVu_Sans',sans-serif] text-[24px] leading-[24px] font-bold text-[#5d6b78]">TÜRKSAT</span>
                        </a>
                        <div className="flex gap-[24px]">
                            <button type="button" title="Ara" className="flex h-[31px] w-[31px] items-center justify-center border border-[#9ab6df] bg-[#eef4fb]">
                                <svg width="16" height="16" viewBox="0 0 16 16" fill="none">
                                    <circle cx="6" cy="6" r="5" fill="#dfeaf3" stroke="#a3adb5" strokeWidth="1.500" />
                                    <path d="M10 10l5 5" stroke="#8a8a8a" strokeWidth="2.500" />
                                </svg>
                            </button>
                            <button type="button" className="flex h-[31px] w-[157px] items-center border border-[#9ab6df] bg-[#e9f1fc] pl-[8px] text-[#22406b]">
                                <span className="border-x-4 border-t-4 border-x-transparent border-t-[#22406b]" />
                                <span className="flex-1 text-center text-[9px] leading-[10px]">
                                    İsmail DEMİR
                                    <br />
                                    (Demo Sayfası)
                                </span>
                            </button>
                        </div>
                    </header>
                    <div className="flex min-h-0 flex-1">
                        <Sidebar />
                        <main className="ml-[4px] flex min-w-0 flex-1 flex-col overflow-hidden border-t border-l border-[#9ab6df] pl-[5px]">
                            <nav className="flex h-[33px] shrink-0 gap-[3px] pt-[3px]">
                                {navItems.map((item) => (
                                    <button
                                        key={item.label}
                                        type="button"
                                        className={clsx(
                                            "flex h-[26px] shrink-0 items-center border border-b-0 border-[#9ab6df] bg-linear-to-b from-[#1b6797] to-[#2079b2] pl-[2px] text-[12px] font-bold whitespace-nowrap text-white",
                                            item.width
                                        )}
                                    >
                                        {item.icon}
                                        {item.label}
                                    </button>
                                ))}
                                <div className="-mr-[9px] ml-auto flex gap-[3px] text-[14px] font-bold text-black">
                                    <button type="button" className="h-[26px] w-[26px] border border-b-0 border-[#9ab6df] bg-[#1f729f]">A+</button>
                                    <button type="button" className="h-[26px] w-[26px] border border-b-0 border-[#9ab6df] bg-[#1f729f]">A-</button>
                                </div>
                            </nav>
                            <div className="flex min-h-0 flex-1 flex-col rounded-tl-[4px] bg-white shadow-[0_0_4px_2px_rgba(120,135,155,0.6)]">
                                <div className="flex h-[32px] shrink-0 items-center rounded-tl-[4px] bg-linear-to-b from-[#f5f9fd] to-[#e0ebf8] pl-[11px]">
                                    <h2 className="text-[13px] font-bold text-[#22406b]">Evrak Oluştur</h2>
                                    <div className="-mr-[9px] ml-auto flex gap-[4px]">
                                        <button type="button" title="Küçült">
                                            <svg width="15" height="14" viewBox="0 0 15 14" fill="#eff3fc" stroke="#8c95ad">
                                                <path d="M.5.5h14v13H.5z" />
                                                <path d="M1 10.500h13v3H1z" fill="#a9c0f8" stroke="#4064d8" />
                                                <path d="M7.500 3v4M5.500 5.500l2 2 2-2" stroke="#4064d8" strokeWidth="1.500" fill="none" />
                                            </svg>
                                        </button>
                                        <button type="button" title="Kapat" className="shrink-0">
                                            <svg width="14" height="14" viewBox="0 0 14 14">
                                                <rect width="14" height="14" rx="2" fill="#d9431c" />
                                                <path d="M3.500 3.500l7 7M10.500 3.500l-7 7" stroke="#fff" strokeWidth="2" />
                                            </svg>
                                        </button>
                                    </div>
                                </div>
                                <div className="flex shrink-0 justify-between bg-[#dfeafb] pb-px pl-[6px]">
                                    <div className="flex gap-px" role="tablist">
                                        {tabs.map((t) => (
                                            <button
                                                key={t.label}
                                                type="button"
                                                role="tab"
                                                aria-selected={t.label === tab}
                                                onClick={() => setTab(t.label)}
                                                className={clsx(
                                                    "flex h-[40px] shrink-0 flex-col items-center justify-between rounded-tl-[4px] rounded-tr-[16px] pt-[2px] text-[11px] leading-[14px] whitespace-nowrap",
                                                    t.width,
                                                    t.label === tab ? "bg-white text-[#8b0000]" : "bg-[#9bbccf] text-black"
                                                )}
                                            >
                                                {t.icon}
                                                {t.label}
                                            </button>
                                        ))}
                                    </div>
                                    <div className="flex gap-[24px]">
                                        {actions.map((a) => (
                                            <button
                                                key={a.label}
                                                type="button"
                                                className="flex h-[40px] shrink-0 flex-col items-center justify-between pt-[2px] text-[11px] leading-[14px] whitespace-nowrap text-black"
                                            >
                                                {a.icon}
                                                {a.label}
                                            </button>
                                        ))}
                                    </div>
                                </div>
                                <EditorToolbar />
                                <div className="flex min-h-0 flex-1">
                                    <div className="min-w-0 flex-1 overflow-hidden pt-[15px]">
                                        <DocumentPage />
                                    </div>
                                    <div className="w-px bg-[#efefef] pt-[17px]">
                                        <div className="h-[530px] bg-[#cdcdcd]" />
                                    </div>
                                </div>
                            </div>
                        </main>
                    </div>
                </div>
                <div className="ml-px w-[4px] bg-[#efefef] pt-[13px]">
                    <div className="h-[715px] bg-[#cdcdcd]" />
                </div>
            </div>
            <div className="flex h-[7px] shrink-0 border-t border-white bg-[#efefef] pr-[10px]">
                <span className="mt-[4px] mr-[7px] ml-px h-[2px] w-[3px] bg-[#555]" />
                <div className="w-[89%] bg-[#cdcdcd]" />
                <span className="mt-[4px] ml-auto h-[2px] w-[3px] bg-[#555]" />
            </div>
            <StyleDialog />
            <Callout />
        </div>
    );
}
